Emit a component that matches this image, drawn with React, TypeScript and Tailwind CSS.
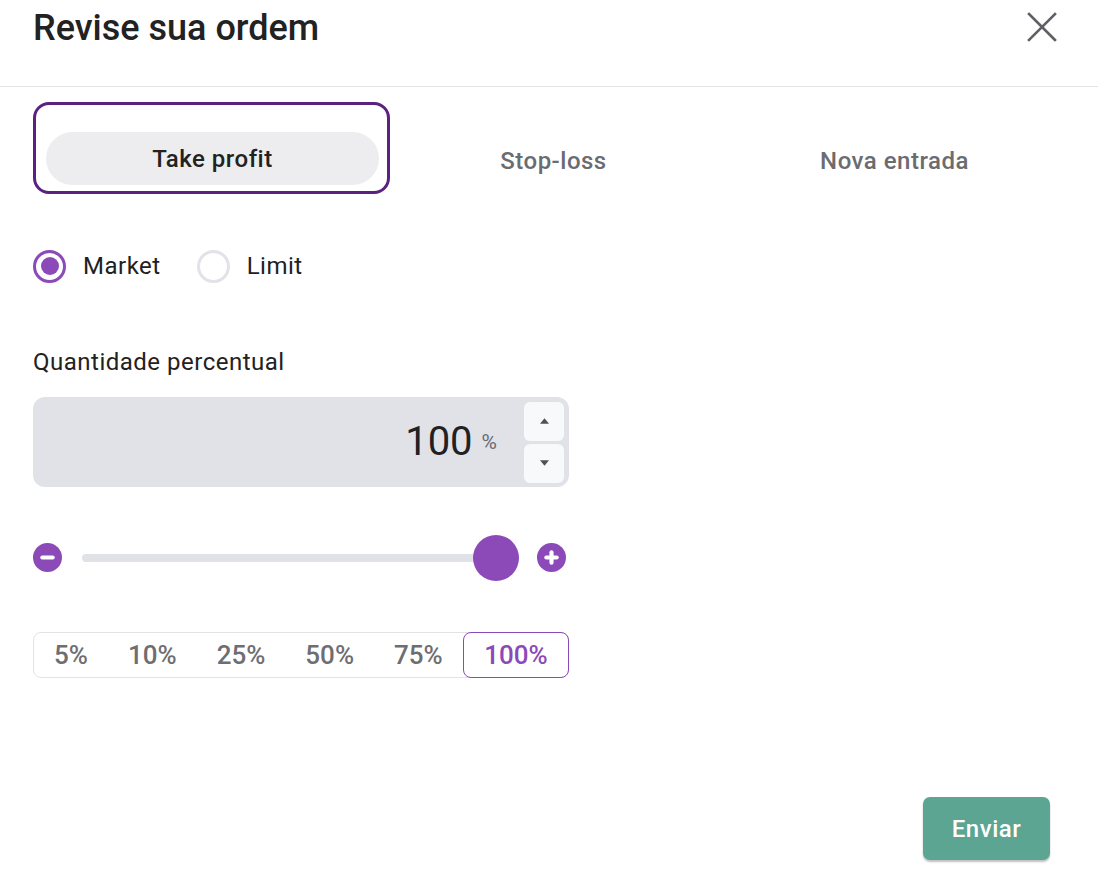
import { useState } from 'react';

const pcts = ['5%', '10%', '25%', '50%', '75%', '100%'];

function Radio({ checked, label }: { checked: boolean; label: string }) {
  return (
    <label className="flex items-center gap-[17px] cursor-pointer">
      <span
        className={`flex h-[33px] w-[33px] items-center justify-center rounded-full border-[3px] ${
          checked ? 'border-[#8b4ab8]' : 'border-[#e2e3e8]'
        }`}
      >
        {checked && <span className="h-[18px] w-[18px] rounded-full bg-[#8b4ab8]" />}
      </span>
      <span className="text-[24px] tracking-[0.5px] text-[#202124]">{label}</span>
    </label>
  );
}

function RoundIcon({ plus }: { plus?: boolean }) {
  return (
    <svg width="29" height="29" viewBox="0 0 28 28">
      <circle cx="14" cy="14" r="14" fill="#8b4ab8" />
      <rect x="7" y="12" width="14" height="4" rx="2" fill="#fff" />
      {plus && <rect x="12" y="7" width="4" height="14" rx="2" fill="#fff" />}
    </svg>
  );
}

export default function App() {
  const [tab, setTab] = useState(0);
  const [pct, setPct] = useState(5);
  const [market, setMarket] = useState(true);

  return (
    <div className="h-[870px] w-[1098px] bg-white font-['Roboto',sans-serif] text-[#202124]">
      <header className="flex h-[87px] items-start justify-between border-b border-[#e4e4e6] pl-[33px] pr-[40px] pt-[6px]">
        <h1 className="text-[36px] font-medium leading-[44px] text-[#222]">Revise sua ordem</h1>
        <button className="mt-[5px] text-[#5f6064]">
          <svg width="32" height="32" viewBox="0 0 32 32" fill="none" stroke="currentColor" strokeWidth="2.6" strokeLinecap="square">
            <path d="M3 3 L29 29 M29 3 L3 29" />
          </svg>
        </button>
      </header>

      <div className="grid grid-cols-3 pl-[42px] pr-[33px] pt-[15px]">
        {['Take profit', 'Stop-loss', 'Nova entrada'].map((t, i) =>
          tab === i ? (
            <button
              key={t}
              onClick={() => setTab(i)}
              className="-ml-[9px] h-[92px] w-[357px] rounded-[16px] border-[3px] border-[#5b2180] pb-[6px] pl-[10px] pr-[8px] pt-[27px]"
            >
              <span className="flex h-[53px] items-center justify-center rounded-full bg-[#ededf0] text-[24px] font-medium tracking-[0.5px] text-[#222]">
                {t}
              </span>
            </button>
          ) : (
            <button
              key={t}
              onClick={() => setTab(i)}
              className="flex h-[92px] items-center justify-center pt-[25px] text-[24px] font-medium tracking-[0.5px] text-[#6b6c70]"
            >
              {t}
            </button>
          )
        )}
      </div>

      <div className="pl-[33px]">
        <div className="mt-[54px] flex items-center gap-[36px]" onClick={() => setMarket(!market)}>
          <Radio checked={market} label="Market" />
          <Radio checked={!market} label="Limit" />
        </div>

        <div className="mt-[62px] text-[24px] leading-[32px] tracking-[0.5px] text-[#222]">Quantidade percentual</div>

        <div className="mt-[19px] flex h-[90px] w-[536px] items-center rounded-[12px] bg-[#e0e2e7] pr-[5px]">
          <div className="flex flex-1 items-center justify-end pr-[27px]">
            <span className="text-[40px] leading-none text-[#202124]">100</span>
            <span className="ml-[9px] text-[21px] leading-none text-[#6b6c70]">%</span>
          </div>
          <div className="flex flex-col gap-[3px]">
            <button className="flex h-[39px] w-[40px] items-center justify-center rounded-[6px] bg-[#f8f9fb]">
              <svg width="9" height="6" viewBox="0 0 10 6"><path d="M5 0 L10 6 L0 6 Z" fill="#505155" /></svg>
            </button>
            <button className="flex h-[39px] w-[40px] items-center justify-center rounded-[6px] bg-[#f8f9fb]">
              <svg width="9" height="6" viewBox="0 0 10 6"><path d="M0 0 L10 0 L5 6 Z" fill="#505155" /></svg>
            </button>
          </div>
        </div>

        <div className="mt-[56px] flex w-[533px] items-center">
          <RoundIcon />
          <div className="relative ml-[20px] mr-[18px] h-[8px] flex-1 rounded-full bg-[#e0e2e7]">
            <span className="absolute -top-[19px] right-0 h-[46px] w-[46px] rounded-full bg-[#8b4ab8]" />
          </div>
          <RoundIcon plus />
        </div>

        <div className="mt-[60px] flex h-[46px] w-[536px] rounded-[8px] border border-[#e2e3e7]">
          {pcts.map((p, i) => (
            <button
              key={p}
              onClick={() => setPct(i)}
              className={`-my-px flex items-center text-[26px] font-medium ${
                pct === i
                  ? '-mr-px min-w-0 flex-1 justify-center rounded-[8px] border border-[#8b4ab8] text-[#8b4ab8]'
                  : 'px-[20px] text-[#6e6e72]'
              }`}
            >
              {p}
            </button>
          ))}
        </div>
      </div>

      <div className="mt-[119px] flex justify-end pr-[48px]">
        <button className="h-[63px] w-[127px] rounded-[7px] bg-[#5ba592] text-[24px] font-medium tracking-[0.5px] text-white shadow-[0_2px_2px_rgba(0,0,0,0.25)]">
          Enviar
        </button>
      </div>
    </div>
  );
}
